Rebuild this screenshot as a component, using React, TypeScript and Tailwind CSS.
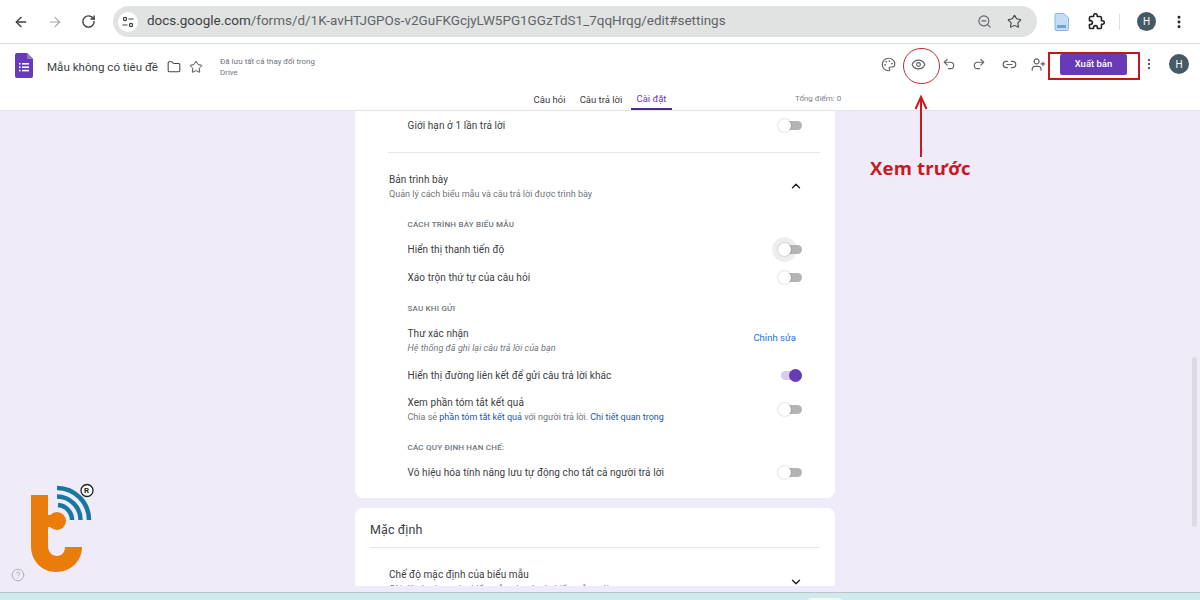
import { ArrowLeft, ArrowRight, RotateCw, ZoomOut, Star, EllipsisVertical, Folder, Palette, Eye, Undo2, Redo2, Link2, UserPlus, ChevronUp, ChevronDown, CircleHelp } from "lucide-react";

function Toggle({ on = false, halo = false }: { on?: boolean; halo?: boolean }) {
  return (
    <div className="relative w-[24px] h-[13px] shrink-0">
      {halo && <div className="absolute left-[-6px] top-[-6px] w-[25px] h-[25px] rounded-full bg-[#eeeeee]" />}
      <div className={`absolute left-[3px] right-0 top-[2px] h-[9px] rounded-full ${on ? "bg-[#d9cdee]" : "bg-[#b4b4b4]"}`} />
      {on ? (
        <div className="absolute right-0 top-0 w-[13px] h-[13px] rounded-full bg-[#673ab7]" />
      ) : (
        <div className="absolute left-0 top-0 w-[13px] h-[13px] rounded-full bg-white shadow-[0_0_2px_rgba(0,0,0,0.3)]" />
      )}
    </div>
  );
}

function Row({ label, h, toggle }: { label: string; h: string; toggle: React.ReactNode }) {
  return (
    <div className={`flex items-center justify-between pl-[52.5px] pr-[33px] ${h}`}>
      <span className="text-[10px] tracking-[0.08px] text-[#3c4043]">{label}</span>
      {toggle}
    </div>
  );
}

function Section({ children, cls }: { children: React.ReactNode; cls: string }) {
  return <div className={`pl-[52.5px] text-[8px] font-medium tracking-[0.2px] text-[#70757a] flex items-center ${cls}`}>{children}</div>;
}

export default function App() {
  return (
    <div className="w-[1200px] h-[600px] overflow-hidden bg-white relative flex flex-col font-['Roboto',sans-serif]">
      {/* Browser toolbar */}
      <div className="h-[44px] shrink-0 flex items-center border-b border-[#dadce0] pl-[4px]">
        <div className="w-[34px] flex justify-center"><ArrowLeft size={16} strokeWidth={2} color="#3c4043" /></div>
        <div className="w-[34px] flex justify-center"><ArrowRight size={16} strokeWidth={1.6} color="#a2a5a9" /></div>
        <div className="w-[33px] flex justify-center"><RotateCw size={15} strokeWidth={2.2} color="#3c4043" /></div>
        <div className="ml-[8px] w-[924px] h-[31px] rounded-full bg-[#e1e3e2] flex items-center pl-[5px] pr-[15px]">
          <div className="w-[20px] h-[20px] rounded-full bg-white flex items-center justify-center">
            <svg width="12" height="12" viewBox="0 0 12 12" fill="none" stroke="#3c4043" strokeWidth="1.2">
              <circle cx="3" cy="3" r="1.6" />
              <path d="M6.5 3H11.5M0.5 9H5.5" />
              <circle cx="9" cy="9" r="1.6" />
            </svg>
          </div>
          <span className="ml-[9px] text-[13.46px] text-[#5f6368] flex-1 whitespace-nowrap"><span className="text-[#3c4043]">docs.google.com</span>/forms/d/1K-avHTJGPOs-v2GuFKGcjyLW5PG1GGzTdS1_7qqHrqg/edit#settings</span>
          <ZoomOut size={15} strokeWidth={1.8} color="#5f6368" />
          <Star size={15} strokeWidth={1.7} color="#3c4043" className="ml-[15px]" />
        </div>
        <svg className="ml-[17px]" width="15" height="18" viewBox="0 0 15 18">
          <path d="M1 1.5A1 1 0 0 1 2 .5H10L14.5 5V16.5A1 1 0 0 1 13.5 17.5H2A1 1 0 0 1 1 16.5Z" fill="#c4dcf7" stroke="#8ab4e8" />
          <rect x="3" y="12" width="9" height="3" fill="#6fa2dc" />
        </svg>
        <svg className="ml-[19px]" width="17" height="17" viewBox="0 0 24 24" fill="none" stroke="#202124" strokeWidth="2.2" strokeLinejoin="round">
          <path d="M20.5 11H19V7c0-1.1-.9-2-2-2h-4V3.5C13 2.12 11.88 1 10.5 1S8 2.12 8 3.5V5H4c-1.1 0-1.99.9-1.99 2v3.8H3.5c1.49 0 2.7 1.21 2.7 2.7s-1.21 2.7-2.7 2.7H2V20c0 1.1.9 2 2 2h3.8v-1.5c0-1.49 1.21-2.7 2.7-2.7 1.49 0 2.7 1.21 2.7 2.7V22H17c1.1 0 2-.9 2-2v-4h1.5c1.38 0 2.5-1.12 2.5-2.5S21.88 11 20.5 11z" />
        </svg>
        <div className="ml-[14px] w-px h-[16px] bg-[#d5e8d8]" />
        <div className="ml-[17px] w-[19px] h-[19px] rounded-full bg-[#455a64] text-white text-[10px] flex items-center justify-center">H</div>
        <EllipsisVertical size={16} strokeWidth={2.4} color="#202124" className="ml-[15px]" />
      </div>

      {/* Forms header */}
      <div className="h-[67px] shrink-0 border-b border-[#e4e4e6] flex flex-col">
        <div className="h-[40px] flex items-center relative">
          <svg className="ml-[15px] mt-[3px]" width="18" height="25" viewBox="0 0 18 25">
            <path d="M2 0H12L18 6V23A2 2 0 0 1 16 25H2A2 2 0 0 1 0 23V2A2 2 0 0 1 2 0Z" fill="#673ab7" />
            <path d="M12 0L18 6H12Z" fill="#9575cd" />
            <g fill="#fff">
              <rect x="4" y="10" width="1.6" height="1.6" /><rect x="7" y="10" width="7" height="1.6" />
              <rect x="4" y="13.4" width="1.6" height="1.6" /><rect x="7" y="13.4" width="7" height="1.6" />
              <rect x="4" y="16.8" width="1.6" height="1.6" /><rect x="7" y="16.8" width="7" height="1.6" />
            </g>
          </svg>
          <span className="ml-[14px] mt-[7px] text-[11.6px] text-[#3c4043] whitespace-nowrap">Mẫu không có tiêu đề</span>
          <Folder size={14} strokeWidth={1.8} color="#444746" className="ml-[9px] mt-[6px]" />
          <Star size={14} strokeWidth={1.6} color="#444746" className="ml-[8px] mt-[6px]" />
          <div className="ml-[17px] mt-[6px] text-[7.9px] leading-[11px] text-[#70757a] w-[110px]">Đã lưu tất cả thay đổi trong<br />Drive</div>
          <div className="flex-1" />
          <div className="flex items-center">
            <Palette size={15} strokeWidth={1.9} color="#5f6368" className="mr-[15px]" />
            <Eye size={15} strokeWidth={1.9} color="#5f6368" className="mr-[16px]" />
            <Undo2 size={14} strokeWidth={1.9} color="#5f6368" className="mr-[16px]" />
            <Redo2 size={14} strokeWidth={1.9} color="#5f6368" className="mr-[16px]" />
            <Link2 size={15} strokeWidth={1.9} color="#5f6368" className="mr-[14px]" />
            <UserPlus size={15} strokeWidth={1.9} color="#5f6368" className="mr-[14px]" />
            <div className="w-[67px] h-[21px] rounded-[2px] bg-[#673ab7] text-white text-[9.5px] font-medium flex items-center justify-center">Xuất bản</div>
            <EllipsisVertical size={14} strokeWidth={2.2} color="#5f6368" className="ml-[15px]" />
            <div className="ml-[13px] mr-[11px] w-[20px] h-[20px] rounded-full bg-[#455a64] text-white text-[10px] flex items-center justify-center">H</div>
          </div>
        </div>
        <div className="flex-1 flex items-stretch text-[9.5px] text-[#5f6368] pl-[528px]">
          <div className="w-[43px] flex items-center justify-center pt-[6px] text-[#3c4043]">Câu hỏi</div>
          <div className="ml-[2px] mr-[2px] w-[56px] flex items-center justify-center pt-[6px] text-[#3c4043]">Câu trả lời</div>
          <div className="w-[41px] flex items-center justify-center pt-[6px] border-b-2 border-[#4a2c8f] text-[#673ab7]">Cài đặt</div>
          <div className="ml-[123px] flex items-center pt-[4px] text-[8px] text-[#80868b]">Tổng điểm: 0</div>
        </div>
      </div>

      {/* Body */}
      <div className="h-[481px] shrink-0 bg-[#f0ebf8] overflow-hidden relative">
        <div className="w-[480px] ml-[355px] flex flex-col gap-[10px]">
          {/* Card 1 */}
          <div className="bg-white rounded-b-[8px] h-[387px] flex flex-col">
            <Row label="Giới hạn ở 1 lần trả lời" h="h-[29px]" toggle={<Toggle />} />
            <div className="ml-[33px] mr-[15px] mt-[12px] h-px bg-[#e6e6e6]" />
            <div className="mt-[20px] pl-[34px] pr-[32px] flex items-center justify-between">
              <div>
                <div className="text-[10px] tracking-[0.08px] leading-[14px] text-[#3c4043]">Bản trình bày</div>
                <div className="text-[9px] leading-[14px] text-[#70757a]">Quản lý cách biểu mẫu và câu trả lời được trình bày</div>
              </div>
              <ChevronUp size={14} strokeWidth={2.4} color="#202124" className="mb-[2px]" />
            </div>
            <Section cls="mt-[17px] h-[14px]">CÁCH TRÌNH BÀY BIỂU MẪU</Section>
            <Row label="Hiển thị thanh tiến độ" h="mt-[3px] h-[28px]" toggle={<Toggle halo />} />
            <Row label="Xáo trộn thứ tự của câu hỏi" h="h-[28px]" toggle={<Toggle />} />
            <Section cls="mt-[11px] h-[14px]">SAU KHI GỬI</Section>
            <div className="mt-[10px] pl-[52.5px] pr-[39px] flex items-center justify-between">
              <div>
                <div className="text-[10px] tracking-[0.08px] leading-[15px] text-[#3c4043]">Thư xác nhận</div>
                <div className="text-[9px] italic tracking-[0.05px] leading-[14px] text-[#70757a]">Hệ thống đã ghi lại câu trả lời của bạn</div>
              </div>
              <span className="text-[9.5px] text-[#1a73e8] mb-[4px]">Chỉnh sửa</span>
            </div>
            <Row label="Hiển thị đường liên kết để gửi câu trả lời khác" h="mt-[6px] h-[28px]" toggle={<Toggle on />} />
            <div className="mt-[6px] pl-[52.5px] pr-[33px] flex items-center justify-between">
              <div>
                <div className="text-[10px] tracking-[0.08px] leading-[15px] text-[#3c4043]">Xem phần tóm tắt kết quả</div>
                <div className="text-[9px] leading-[14px] text-[#70757a]">Chia sẻ <span className="text-[#1a56b0]">phần tóm tắt kết quả</span> với người trả lời. <span className="text-[#1a56b0]">Chi tiết quan trọng</span></div>
              </div>
              <Toggle />
            </div>
            <Section cls="mt-[17px] h-[14px]">CÁC QUY ĐỊNH HẠN CHẾ:</Section>
            <Row label="Vô hiệu hóa tính năng lưu tự động cho tất cả người trả lời" h="mt-[3px] h-[28px]" toggle={<Toggle />} />
          </div>
          {/* Card 2 */}
          <div className="bg-white rounded-t-[8px] h-[78px] overflow-hidden">
            <div className="h-[39px] pl-[15px] pt-[6px] flex items-center text-[12.5px] tracking-[0.1px] text-[#3c4043]">Mặc định</div>
            <div className="ml-[15px] mr-[15px] h-px bg-[#e6e6e6]" />
            <div className="mt-[20px] pl-[34px] pr-[32px] flex justify-between">
              <div>
                <div className="text-[10px] tracking-[0.08px] leading-[14px] text-[#3c4043]">Chế độ mặc định của biểu mẫu</div>
                <div className="text-[9px] leading-[14px] text-[#70757a]">Cài đặt áp dụng cho biểu mẫu này và các biểu mẫu mới</div>
              </div>
              <ChevronDown size={14} strokeWidth={2.4} color="#202124" className="mt-[7px]" />
            </div>
          </div>
        </div>
        {/* Scrollbar */}
        <div className="absolute left-[1192px] top-[246px] w-[5px] h-[170px] rounded-full bg-[#dcdae2]" />
        <CircleHelp size={14} strokeWidth={1.5} color="#a8a8ae" className="absolute left-[11px] top-[457px]" />
      </div>

      {/* Taskbar sliver */}
      <div className="flex-1 border-t border-[#b9c4c8] bg-[#cfe9ec] relative">
        <div className="absolute left-[808px] top-[5px] w-[34px] h-[4px] rounded-t-[3px] bg-[#f4f6f6]" />
      </div>

      {/* Annotations */}
      <div className="absolute left-[903px] top-[48px] w-[37px] h-[36px] rounded-full border border-[#b5302c]" />
      <div className="absolute left-[1048px] top-[52px] w-[92px] h-[28px] border-2 border-[#c5161d]" />
      <svg className="absolute left-[910px] top-[94px]" width="22" height="64" viewBox="0 0 22 64" fill="none" stroke="#d0181f" strokeWidth="2">
        <path d="M11 63V3M5.5 15L11 3L16.5 15" />
      </svg>
      <div className="absolute left-[870px] top-[156px] text-[18.5px] leading-[24px] font-bold tracking-[0.2px] text-[#c8191f] font-['Open_Sans',sans-serif] whitespace-nowrap">Xem trước</div>

      {/* Logo */}
      <svg className="absolute left-[20px] top-[480px]" width="80" height="96" viewBox="20 480 80 96" fill="none">
        <path d="M31 495H48V546C48 552 52 556 57 556C62 556 65 552 65 547H82C82 561 71 572 56 572C42 572 31 561 31 546Z" fill="#e97c0a" />
        <circle cx="57" cy="521" r="9" fill="#e97c0a" />
        <path d="M48 515H52V527H48Z" fill="#e97c0a" />
        <g stroke="#17789f" strokeWidth="4.5">
          <path d="M57 488A32 32 0 0 1 89 520" />
          <path d="M57 496.5A23.5 23.5 0 0 1 80.5 520" />
          <path d="M58 505A15 15 0 0 1 72 520" />
        </g>
        <circle cx="87" cy="490.5" r="6" fill="#fff" stroke="#222" strokeWidth="1.3" />
      </svg>
      <div className="absolute left-[84px] top-[486px] text-[8px] leading-[9px] font-bold text-[#222]">R</div>
    </div>
  );
}
